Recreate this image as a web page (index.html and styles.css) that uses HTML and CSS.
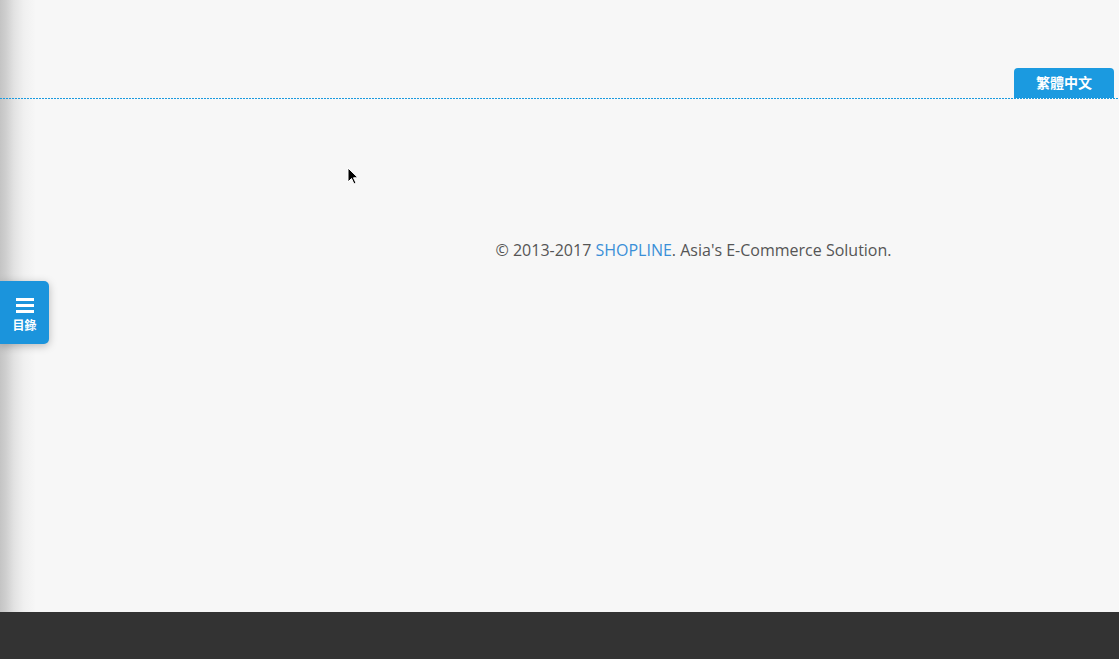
FILE: index.html
```html
<!DOCTYPE html>
<html lang="zh-Hant">
<head>
    <meta charset="UTF-8">
    <meta name="viewport" content="width=device-width, initial-scale=1.0">
    <title>SHOPLINE</title>
    <link rel="stylesheet" href="styles.css">
</head>
<body>
    <div class="page">
        <div class="edge-shadow"></div>

        <div class="topbar">
            <button class="lang-btn">繁體中文</button>
        </div>

        <div class="main">
            <p class="copyright">&copy; 2013-2017 <a href="#">SHOPLINE</a>. Asia's E-Commerce Solution.</p>
        </div>

        <div class="footer"></div>

        <button class="toc-tab">
            <span class="burger"><i></i><i></i><i></i></span>
            <span class="toc-label">目錄</span>
        </button>

        <svg class="cursor" width="12" height="19" viewBox="0 0 12 19">
            <path d="M1 1 L1 15 L4.5 11.5 L7 17 L9 16 L6.5 10.8 L11 10.8 Z" fill="#000" stroke="#fff" stroke-width="1"/>
        </svg>
    </div>
</body>
</html>
```

FILE: styles.css
```css
html, body {
    margin: 0;
    padding: 0;
    height: 100%;
}
body {
    font-family: 'Open Sans', 'Noto Sans', 'Noto Sans CJK TC', sans-serif;
    background: #f7f7f7;
    overflow: hidden;
}
.page {
    position: relative;
    height: 659px;
    display: flex;
    flex-direction: column;
}
.edge-shadow {
    position: absolute;
    left: 0;
    top: 0;
    bottom: 47px;
    width: 36px;
    background: linear-gradient(to right, #c4c4c4 0, #cfcfcf 6px, #e2e2e2 14px, #f0f0f0 24px, #f7f7f7 36px);
    pointer-events: none;
}
.topbar {
    height: 98px;
    display: flex;
    justify-content: flex-end;
    align-items: flex-end;
    padding-right: 5px;
    box-sizing: border-box;
    position: relative;
}
.topbar::after {
    content: '';
    position: absolute;
    left: 0;
    right: 0;
    bottom: -1px;
    height: 1px;
    background: repeating-linear-gradient(to right, #1a9be0 0 2px, transparent 2px 3px);
}
.lang-btn {
    width: 100px;
    height: 30px;
    border: none;
    border-radius: 4px 4px 0 0;
    background: #1b9ae0;
    color: #fff;
    font-family: 'Noto Sans CJK TC', sans-serif;
    font-weight: 700;
    font-size: 14px;
    padding: 0 0 2px;
    cursor: pointer;
}
.main {
    flex: 1;
    padding-left: 268px;
}
.copyright {
    margin: 141px 0 0;
    text-align: center;
    font-size: 16px;
    color: #555;
}
.copyright a {
    color: #3a8fd8;
    text-decoration: none;
}
.footer {
    height: 47px;
    background: #333;
}
.toc-tab {
    position: absolute;
    left: 0;
    top: 281px;
    width: 49px;
    height: 63px;
    border: none;
    border-radius: 0 5px 5px 0;
    background: #1b94dc;
    box-shadow: 0 2px 8px rgba(0, 0, 0, 0.25);
    color: #fff;
    padding: 0;
    display: flex;
    flex-direction: column;
    align-items: center;
    cursor: pointer;
}
.burger {
    margin-top: 17px;
    display: flex;
    flex-direction: column;
    gap: 3px;
}
.burger i {
    display: block;
    width: 18px;
    height: 3px;
    background: #fff;
}
.toc-label {
    margin-top: 5px;
    font-family: 'Noto Sans CJK TC', sans-serif;
    font-weight: 700;
    font-size: 12px;
    line-height: 14px;
}
.cursor {
    position: absolute;
    left: 347px;
    top: 167px;
}
```
